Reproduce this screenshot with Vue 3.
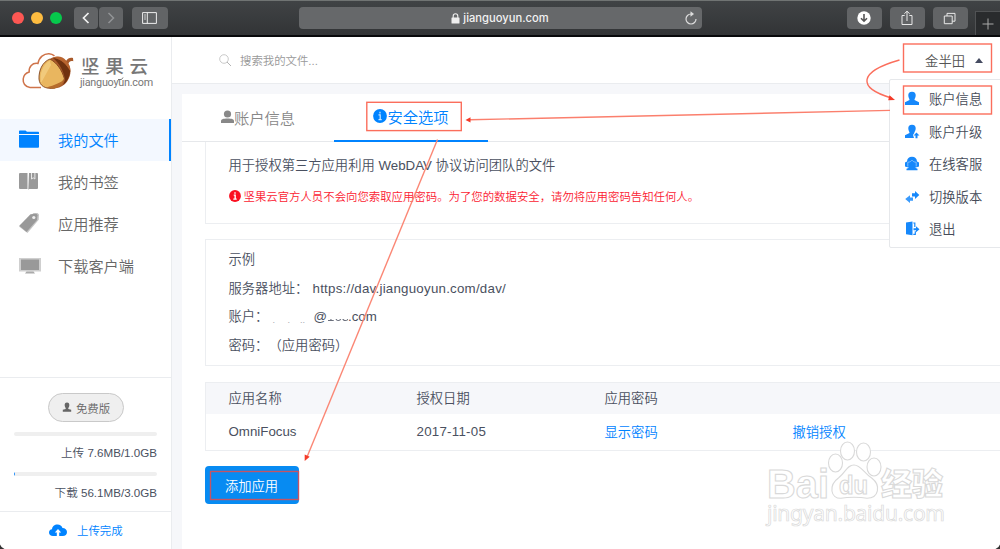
<template>
  <div class="window">
    <!-- Barra del navegador -->
    <header class="browser-bar">
      <div class="lights">
        <span class="light red"></span>
        <span class="light yellow"></span>
        <span class="light green"></span>
      </div>
      <div class="history">
        <button class="bar-btn small">
          <svg width="10" height="14" viewBox="0 0 10 14"><path d="M7.5 2 2.5 7l5 5" fill="none" stroke="#f2f2f2" stroke-width="1.7" /></svg>
        </button>
        <button class="bar-btn small">
          <svg width="10" height="14" viewBox="0 0 10 14"><path d="M2.5 2l5 5-5 5" fill="none" stroke="#929496" stroke-width="1.5" /></svg>
        </button>
      </div>
      <button class="bar-btn">
        <svg width="15" height="12" viewBox="0 0 15 12" fill="none" stroke="#eee"><path d="M.6.6h13.8v10.8H.6zM5.3.6v10.8" /><path d="M2 3h2M2 5h2M2 7h2" stroke-width=".8" /></svg>
      </button>
      <div class="address">
        <svg width="9" height="11" viewBox="0 0 9 11"><rect x=".5" y="4.5" width="8" height="6" rx=".6" fill="#eee" /><path d="M2.2 5V3a2.3 2.3 0 0 1 4.6 0v2" fill="none" stroke="#eee" stroke-width="1.1" /></svg>
        <span>jianguoyun.com</span>
        <svg class="reload" width="14" height="15" viewBox="0 0 14 15"><path d="M7 3a5 5 0 1 0 5 5" fill="none" stroke="#ddd" stroke-width="1.2" /><path d="M6.5.2 10 3 6.5 5.7z" fill="#ddd" /></svg>
      </div>
      <div class="bar-right">
        <button class="bar-btn">
          <svg width="14" height="14" viewBox="0 0 14 14"><circle cx="7" cy="7" r="6.7" fill="#fff" /><path d="M7 3v7M4 7.2l3 3 3-3" fill="none" stroke="#555" stroke-width="1.6" /></svg>
        </button>
        <button class="bar-btn">
          <svg width="14" height="16" viewBox="0 0 14 16" fill="none" stroke="#e8e8e8"><path d="M4.7 5.5H2v9h10v-9H9.3M7 11V1.3M4.3 3.8 7 1.2l2.7 2.6" /></svg>
        </button>
        <button class="bar-btn">
          <svg width="14" height="13" viewBox="0 0 14 13" fill="none" stroke="#e8e8e8"><path d="M1.3 4h7.9v7.7H1.3zM4 4V1.4h8v7.8H9.2" /></svg>
        </button>
      </div>
      <div class="new-tab">
        <svg width="12" height="12" viewBox="0 0 12 12"><path d="M6 .5v11M.5 6h11" stroke="#aaa" /></svg>
      </div>
    </header>

    <div class="page">
      <!-- Menú lateral -->
      <aside class="sidebar">
        <div class="logo">
          <svg width="54" height="40" viewBox="0 0 54 40">
            <path d="M19 35.5H8C3 35 .8 31 1.2 27c.4-3.5 2.5-6 6-7-.5-5 3-9.5 8.8-8.5C17 5 22 1.5 27 1.7c2.5.2 4 1 5.5 2.2" fill="none" stroke="#cf744b" stroke-width="1.5" />
            <path d="M28 7c5-4 12-2.500 16 2 2-3 4-3.500 7-3l.3 3.200c-3-.5-4 .3-4.800 2.500C50 17 49 26 43 32c-4 3.500-9 5-15 4.500z" fill="#a95a2b" />
            <path d="M31 6c6 5 11 13 12 22l-2 5c4-3 6.500-8 7.300-14-4-7-9-12-17.300-13z" fill="#70320f" />
            <path d="M31 5.500c5-2 10-1 13 3l3.500 5.500c.5 2 .8 3.500.8 5-4-7-9-12-17.300-13.500z" fill="#b9652f" />
            <path d="M28 7c7 4 12 11 14.500 20-2 3-6 7-10 9-9 1.500-15-2-15.500-9C16.700 19 20 10 28 7z" fill="#e9b65f" stroke="#81441c" stroke-width=".9" />
            <path d="M27.500 8.500C20 14 17.500 22 19 31l10-18z" fill="#f6d58c" opacity=".65" />
            <path d="M42.500 27c-4 4-10 6-18 8.500 7 2.500 15 1 18-8.500z" fill="#b66c2c" />
          </svg>
          <div class="logo-text">
            <strong>坚果云</strong>
            <span>jianguoyun.com</span>
            <svg class="leaf" width="6" height="4" viewBox="0 0 6 4"><path d="M0 2.500h3.500L5 .5" fill="none" stroke="#777" /></svg>
          </div>
        </div>

        <nav class="nav">
          <a v-for="item in navItems" :key="item.icon" class="nav-item" :class="{ active: item.icon === 'folder' }">
            <svg width="22" height="20" viewBox="0 0 22 20">
              <g v-if="item.icon === 'folder'" fill="#0083ff">
                <path d="M0 5V2.300Q0 1.500.8 1.500H6.500L8 2.800h11.200q.8 0 .8.8V5z" /><path d="M0 6h20v11.700q0 1-1 1H1q-1 0-1-1z" />
              </g>
              <g v-else-if="item.icon === 'book'" fill="#999">
                <path d="M1 2h7.500v16H1q-1 0-1-1V3q0-1 1-1zM10 2h8q1 0 1 1v14q0 1-1 1h-8l-.7 1z" /><path d="M12.500 2v6l1.700-1.200 1.700 1.200V2" fill="none" stroke="#e8e8e8" />
              </g>
              <g v-else-if="item.icon === 'tag'">
                <path d="M14.500 0h4l1.500 1.500-.3 5.200L8.500 20 0 13.500z" fill="#c5c5c5" /><path d="M11.500 1.200 17 .8q1.500 0 1.500 1.500L18 7 7.500 19 .3 12.700z" fill="#999" /><circle cx="14.800" cy="4.500" r="1.600" fill="#eee" />
              </g>
              <g v-else>
                <path d="M0 3h22v13.500H0z" fill="#cfcfcf" /><path d="M2 4.500h18V15H2z" fill="#999" /><path d="M7.500 16.500h7l1.500 2H6z" fill="#aaa" />
              </g>
            </svg>
            <span>{{ item.label }}</span>
          </a>
        </nav>

        <div class="usage">
          <div class="plan">
            <svg width="10" height="11" viewBox="0 0 10 11"><path d="M5 .5c1.700 0 2.500 1.200 2.300 3C7.200 5 6.300 5.500 6.200 7l3 .8v2H.8v-2l3-.8C3.700 5.500 2.800 5 2.700 3.500 2.500 1.700 3.300.5 5 .5z" fill="#666" /></svg>
            <span>免费版</span>
          </div>
          <div v-for="row in usage" :key="row.text" class="usage-row">
            <div class="track"><div class="fill" :style="{ width: row.percent + '%' }"></div></div>
            <p>{{ row.text }}</p>
          </div>
        </div>
        <div class="upload-done">
          <svg width="18" height="13" viewBox="0 0 18 13"><path d="M4 12C1.500 12 0 10.500 0 8.500c0-1.800 1.200-3 3-3.200C3.200 2.500 5.500.5 8.500.5c2.500 0 4.300 1.300 5 3.500 2.600 0 4.500 1.700 4.500 4 0 2.500-1.700 4-4.200 4h-3.600V8.500h2L9 5 5.800 8.500h2V12z" fill="#0083ff" /></svg>
          <span>上传完成</span>
        </div>
      </aside>

      <main class="main">
        <div class="topbar">
          <div class="search">
            <svg width="13" height="13" viewBox="0 0 13 13"><circle cx="5" cy="5" r="4.300" fill="none" stroke="#bbb" stroke-width=".8" /><path d="M8 8l4 4" stroke="#aaa" stroke-width=".9" /></svg>
            <span>搜索我的文件...</span>
          </div>
          <div class="user">
            <span>金半田</span>
            <i class="caret"></i>
          </div>
        </div>

        <section class="content">
          <div class="tabs">
            <div class="tab">
              <svg width="13" height="14" viewBox="0 0 13 14"><circle cx="6.500" cy="4" r="3.600" fill="#888" /><path d="M0 13v-2c0-2 2.500-2.600 6.500-2.600S13 9 13 11v2z" fill="#888" /></svg>
              <span>账户信息</span>
            </div>
            <div class="tab active">
              <svg width="14" height="14" viewBox="0 0 14 14"><circle cx="7" cy="7" r="6.900" fill="#0083ff" /><path d="M7 2.700v1.700M5.500 5.900h1.700v4.600M5.500 10.600h3.200" fill="none" stroke="#cce6ff" stroke-width="1.200" /></svg>
              <span>安全选项</span>
            </div>
          </div>

          <div class="panels">
            <div class="panel intro">
              <p>用于授权第三方应用利用 WebDAV 协议访问团队的文件</p>
              <div class="warning">
                <svg width="12" height="12" viewBox="0 0 14 14"><circle cx="7" cy="7" r="6.900" fill="#fb0f20" /><path d="M7 2.500v2M5.500 6h1.700v4.600M5 10.700h4" fill="none" stroke="#fff" stroke-width="1.600" /></svg>
                <span>坚果云官方人员不会向您索取应用密码。为了您的数据安全，请勿将应用密码告知任何人。</span>
              </div>
            </div>

            <div class="panel example">
              <p>示例</p>
              <p><span class="key url-key">服务器地址：</span><span class="url">https://dav.jianguoyun.com/dav/</span></p>
              <p><span class="key account-key">账户：</span><span class="residue">. &nbsp; &nbsp; . &nbsp; &nbsp;..</span><span>@</span><span class="erased">163</span><span>.com</span></p>
              <p><span class="key pass-key">密码：</span>（应用密码）</p>
            </div>

            <div class="table">
              <div class="row head">
                <span>应用名称</span><span>授权日期</span><span>应用密码</span><span></span>
              </div>
              <div class="row">
                <span>OmniFocus</span><span class="date">2017-11-05</span><span class="link">显示密码</span><span class="link">撤销授权</span>
              </div>
            </div>

            <button class="add-btn">添加应用</button>
          </div>
        </section>
      </main>
    </div>

    <!-- Menú desplegable del usuario -->
    <div class="user-menu">
      <div v-for="(item, i) in menuItems" :key="item" class="menu-item">
        <svg width="15" height="15" viewBox="0 0 15 15" fill="#1688fb">
          <path v-if="i === 0" d="M7 .7c2.500 0 3.900 1.500 3.700 4-.1 2-1.300 3-1.200 4.300l4.500 2.200V14H0v-2.800L4.500 9c.1-1.300-1.100-2.300-1.200-4.300C3.100 2.200 4.500.7 7 .7z" />
          <g v-else-if="i === 1"><path d="M7 .7c2.500 0 3.900 1.500 3.700 4-.1 2-1.300 3-1.400 4.300L8 11l1 3H0v-2.800L4.500 9c.1-1.300-1.100-2.300-1.200-4.300C3.100 2.200 4.500.7 7 .7z" /><path d="M11.500 8.500l3 3h-2v2.800h-2v-2.800h-2z" /></g>
          <g v-else-if="i === 2"><path d="M2 5.500C2.300 2.300 4 .8 7 .8s4.700 1.500 5 4.700l2 1v4l-2.500.8-1.500.5 2.500 1V14.200h-11v-1.400l2.500-1-1.500-.5L0 10.500v-4z" /><path d="M2.800 10.500V6.200c2 0 3.300-.8 4.200-2 1 1.200 2.200 2 4.200 2v4.300" fill="none" stroke="#a6d3ff" stroke-width=".7" /></g>
          <g v-else-if="i === 3"><path d="M7 4.300h3V2l4.300 4L10 10V7.500H7z" /><path d="M8 8.500H5V6.300L.2 10 5 14v-2.300h3z" opacity=".85" /></g>
          <g v-else><path d="M1 1.500 7.500.5v13.800L1 13.300z" /><path d="M8.300 2h1.500v4M8.300 13.300h2v-3" fill="none" stroke="#1688fb" stroke-width="1.200" /><path d="M8.500 7.200h2.500V5.200l3.500 3-3.500 3V9.200H8.500z" /></g>
        </svg>
        <span>{{ item }}</span>
      </div>
    </div>

    <!-- Marcas y flechas del tutorial -->
    <svg class="notes" width="1000" height="549" viewBox="0 0 1000 549">
      <g class="watermark">
        <text x="767" y="497.500" font-size="41" font-weight="700" textLength="62" lengthAdjust="spacingAndGlyphs">Bai</text>
        <path d="M854 465c-7 0-8 7-15 12.500-11 8-8.500 21 2 20.800 7-1.500 19-1.500 26 0 12 0 14-13 5-20-9-6-11-13.300-18-13.300z" />
        <ellipse cx="835.500" cy="463" rx="7" ry="9" /><ellipse cx="847.500" cy="451" rx="7" ry="9" />
        <ellipse cx="863.500" cy="452" rx="7" ry="9" /><ellipse cx="874" cy="467" rx="7" ry="9" />
        <text x="839" y="493.500" font-size="25" font-weight="700" textLength="29" lengthAdjust="spacingAndGlyphs">du</text>
        <text class="cjk" x="881" y="495" font-size="31" textLength="62">经验</text>
        <text class="domain" x="767" y="521" font-size="21" textLength="178">jingyan.baidu.com</text>
      </g>
      <g fill="none" stroke="#fb6e5c" stroke-width="1.400">
        <rect x="903.500" y="44" width="88" height="28" />
        <rect x="903.500" y="86" width="88" height="28" />
        <rect x="366.800" y="102.300" width="94.500" height="28.300" />
        <rect x="210.500" y="471.500" width="88" height="28" stroke="#c55464" />
        <path d="M899.500 60c-42 12-42 28-8 38" />
        <path d="M890 110.400 470 119.800" stroke="#fb7f6d" />
        <path d="M437.500 139.500 307 457" stroke="#fb8775" />
      </g>
      <g fill="#f43b29">
        <path d="M895 100l-5.500-4.700-1.300 5z" />
        <path d="M465.500 119.900l5-2.600v5.200z" />
        <path d="M304.700 461v-6.500l5 2.300z" />
      </g>
      <path d="M0 544.500q1 3 4.500 4.500H0zM1000 544.500q-1 3-4.500 4.500h4.500z" fill="#333" />
    </svg>
  </div>
</template>

<script setup>
const navItems = [
  { icon: 'folder', label: '我的文件' },
  { icon: 'book', label: '我的书签' },
  { icon: 'tag', label: '应用推荐' },
  { icon: 'monitor', label: '下载客户端' }
];

const usage = [
  { text: '上传 7.6MB/1.0GB', percent: 0 },
  { text: '下载 56.1MB/3.0GB', percent: 1 }
];

const menuItems = ['账户信息', '账户升级', '在线客服', '切换版本', '退出'];
</script>

<style>
body {
  margin: 0;
  overflow: hidden;
}
</style>

<style scoped>
.window {
  position: relative;
  display: flex;
  flex-direction: column;
  width: 1000px;
  height: 549px;
  overflow: hidden;
  background: #fff;
  color: #4a5060;
  font-family: "Liberation Sans", "Noto Sans CJK SC", sans-serif;
  font-size: 13.3px;
  font-weight: 350;
}

.window * {
  box-sizing: border-box;
}

svg {
  display: block;
  flex: none;
}

p {
  margin: 0;
}

.browser-bar {
  display: flex;
  flex: none;
  align-items: center;
  height: 37px;
  padding-left: 12px;
  background: linear-gradient(#404345, #323436);
  border-top: 1px solid #707473;
  border-bottom: 2px solid #08090b;
}

.lights {
  display: flex;
  gap: 7px;
  width: 62px;
}

.light {
  width: 12px;
  height: 12px;
  border-radius: 50%;
}

.red { background: #fc5753; }
.yellow { background: #fdbc40; }
.green { background: #06c84c; }

.history {
  display: flex;
  gap: 1px;
  margin-right: 9px;
}

.bar-btn {
  display: flex;
  align-items: center;
  justify-content: center;
  width: 35.5px;
  height: 21.5px;
  padding: 0;
  border: 0;
  border-radius: 4px;
  background: #626466;
}

.bar-btn.small {
  width: 24px;
}

.address {
  position: relative;
  display: flex;
  align-items: center;
  justify-content: center;
  gap: 3px;
  width: 403px;
  height: 21.5px;
  margin-left: 131px;
  border-radius: 4px;
  background: #66686a;
  color: #f2f2f2;
  font-family: Inter, sans-serif;
  font-size: 11.2px;
  font-weight: 500;
}

.reload {
  position: absolute;
  right: 4px;
}

.bar-right {
  display: flex;
  gap: 7.5px;
  margin-left: 145px;
}

.new-tab {
  display: flex;
  align-items: center;
  justify-content: center;
  align-self: flex-end;
  width: 25px;
  height: 24px;
  margin-left: auto;
  background: #292b2d;
  border: 1px solid #505254;
  border-width: 1px 0 0 1px;
}

.page {
  display: flex;
  flex: 1;
  min-height: 0;
}

.sidebar {
  display: flex;
  flex: none;
  flex-direction: column;
  width: 172px;
  border-right: 1px solid #eaecef;
}

.logo {
  display: flex;
  height: 81.5px;
  padding: 15px 0 0 22px;
  gap: 5px;
}

.logo-text {
  position: relative;
  display: flex;
  flex-direction: column;
  color: #777;
  padding-top: 5px;
}

.logo-text strong {
  font-size: 18.5px;
  font-weight: 500;
  letter-spacing: 5.8px;
  line-height: 20px;
}

.logo-text span {
  margin-left: -1px;
  font-family: Roboto, "Noto Sans", sans-serif;
  font-size: 10.8px;
  font-weight: 400;
  letter-spacing: -0.24px;
  line-height: 11px;
}

.leaf {
  position: absolute;
  top: 25px;
  left: 37px;
}

.nav-item {
  display: flex;
  align-items: center;
  height: 42px;
  padding: 0 0 1px 19px;
  gap: 17px;
  color: #666;
  font-size: 15.2px;
}

.nav-item.active {
  background: #f3f8ff;
  border-right: 2px solid #0083ff;
  color: #0083ff;
}

.usage {
  margin-top: auto;
  height: 134px;
  padding: 15px 14px 0;
  border-top: 1px solid #eaecef;
}

.plan {
  display: flex;
  align-items: center;
  justify-content: center;
  gap: 4px;
  width: 76px;
  height: 29px;
  margin: 0 auto 10px 34px;
  border: 1px solid #c9c9c9;
  border-radius: 15px;
  background: #efefef;
  color: #666;
  font-size: 11.4px;
}

.usage-row {
  height: 40px;
}

.track {
  height: 4px;
  border-radius: 2px;
  background: #efefef;
  overflow: hidden;
}

.fill {
  height: 4px;
  background: #1688fb;
}

.usage p {
  font-size: 11.6px;
  line-height: 34px;
  text-align: right;
  white-space: nowrap;
}

.upload-done {
  display: flex;
  align-items: center;
  height: 38px;
  padding: 0 0 1px 49px;
  gap: 10px;
  border-top: 1px solid #eaecef;
  color: #0083ff;
  font-size: 11.4px;
}

.main {
  display: flex;
  flex: 1;
  flex-direction: column;
  min-width: 0;
  padding-left: 10px;
  background: #f6f7fa;
}

.topbar {
  display: flex;
  flex: none;
  align-items: center;
  justify-content: space-between;
  height: 47px;
  margin-left: -10px;
  padding: 0 17px 0 47px;
  background: #fff;
  border-bottom: 1px solid #eaecef;
}

.search {
  display: flex;
  align-items: center;
  gap: 8px;
  color: #999;
  font-size: 11.4px;
}

.user {
  display: flex;
  align-items: center;
  gap: 10px;
  color: #555;
}

.caret {
  border: 4.5px solid transparent;
  border-top: 0;
  border-bottom: 5.5px solid #454b61;
}

.content {
  flex: 1;
  margin-top: 10px;
  background: #fff;
}

.tabs {
  display: flex;
  height: 47.5px;
  border-bottom: 1px solid #e6e8eb;
}

.tab {
  display: flex;
  align-items: center;
  justify-content: center;
  width: 152px;
  height: 47.5px;
  padding-bottom: 1px;
  color: #888;
  font-size: 15.3px;
}

.tab.active {
  width: 154px;
  border-bottom: 2px solid #0083ff;
  color: #0083ff;
}

.panels {
  padding-left: 22.5px;
}

.panel {
  border: 1px solid #eceef1;
  border-right: 0;
  padding-left: 23px;
}

.intro {
  height: 82px;
  border-top: 0;
  padding-top: 9.5px;
}

.intro p {
  line-height: 30px;
}

.warning {
  display: flex;
  align-items: center;
  gap: 3px;
  height: 30px;
  color: #fb2232;
  font-size: 11.4px;
}

.example {
  height: 127px;
  margin-top: 15.5px;
  padding-top: 6px;
}

.example p {
  display: flex;
  height: 28.7px;
  line-height: 28.7px;
  white-space: nowrap;
}

.url {
  letter-spacing: 0.24px;
}

.url-key { width: 84px; }
.account-key { width: 44px; }
.pass-key { width: 40px; }

.residue {
  width: 41px;
  color: #a5a8b0;
  font-size: 9px;
  padding-top: 3px;
}

/* sólo queda visible la base de los dígitos */
.erased {
  width: 21px;
  background: linear-gradient(transparent 56%, #6a6f7c 56%);
  -webkit-background-clip: text;
  background-clip: text;
  color: transparent;
}

.table {
  margin-top: 15.5px;
  border: 1px solid #eceef1;
  border-right: 0;
}

.row {
  display: grid;
  grid-template-columns: repeat(4, 188px);
  align-items: center;
  height: 36px;
  padding: 0 0 1px 23px;
}

.row.head {
  height: 31px;
  background: #f6f7fa;
}

.date {
  letter-spacing: 0.25px;
}

.link {
  color: #0083ff;
}

.add-btn {
  display: block;
  width: 94px;
  height: 38px;
  margin-top: 15.5px;
  padding: 0;
  border: 0;
  border-radius: 4px;
  background: #078bf2;
  color: #fff;
  font: inherit;
}

.user-menu {
  position: absolute;
  top: 79px;
  left: 889px;
  width: 125px;
  height: 169px;
  padding-top: 2.5px;
  border: 1px solid #e6e8eb;
  border-radius: 2px;
  background: #fff;
}

.menu-item {
  display: flex;
  align-items: center;
  gap: 9px;
  height: 32.5px;
  padding-left: 15px;
  color: #454b58;
}

.notes {
  position: absolute;
  inset: 0;
  pointer-events: none;
}

.watermark {
  fill: #fff;
  stroke: #d9d9d9;
  stroke-width: 1.1;
}

.watermark .cjk {
  font-family: "Noto Sans CJK SC", sans-serif;
  font-weight: 900;
}

.watermark .domain {
  font-family: "Noto Sans", sans-serif;
  font-weight: 400;
  stroke-width: 0.7;
}
</style>
